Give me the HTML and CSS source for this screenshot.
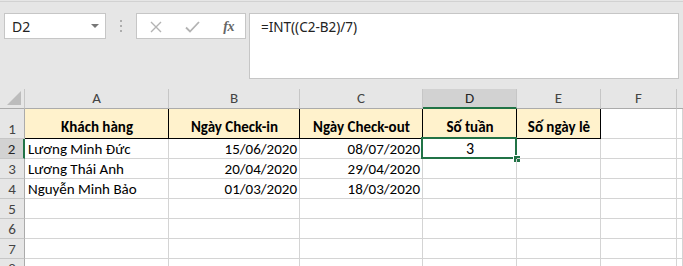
FILE: index.html
```html
<!DOCTYPE html>
<html lang="vi">
<head>
  <meta charset="UTF-8" />
  <title>Số tuần</title>
  <link rel="stylesheet" href="styles.css">
</head>
<body>
  <div class="toolbar">
    <div class="name-box">
      <span>D2</span>
      <span class="caret"></span>
    </div>
    <div class="grip"><i></i><i></i><i></i></div>
    <div class="fx-box">
      <svg width="12" height="12" viewBox="0 0 12 12"><path d="M1 1L11 11M11 1L1 11" stroke="#b3b3b3" stroke-width="1.4" fill="none"/></svg>
      <svg width="15" height="12" viewBox="0 0 15 12"><path d="M1 6.5L5 10.5L14 1" stroke="#b3b3b3" stroke-width="1.8" fill="none"/></svg>
      <span class="fx">fx</span>
    </div>
    <div class="formula">=INT((C2-B2)/7)</div>
  </div>

  <div class="sheet">
    <div class="corner"><span class="tri"></span></div>
    <div class="col-head">A</div>
    <div class="col-head">B</div>
    <div class="col-head">C</div>
    <div class="col-head sel">D</div>
    <div class="col-head">E</div>
    <div class="col-head">F</div>
    <div class="col-head last"></div>

    <div class="row-head">1</div>
    <div class="cell title">Khách hàng</div>
    <div class="cell title">Ngày Check-in</div>
    <div class="cell title">Ngày Check-out</div>
    <div class="cell title">Số tuần</div>
    <div class="cell title">Số ngày lẻ</div>
    <div class="cell"></div>
    <div class="cell"></div>

    <div class="row-head sel">2</div>
    <div class="cell">Lương Minh Đức</div>
    <div class="cell num">15/06/2020</div>
    <div class="cell num">08/07/2020</div>
    <div class="cell center active">3<span class="frame"><span class="handle"></span></span></div>
    <div class="cell"></div>
    <div class="cell"></div>
    <div class="cell"></div>

    <div class="row-head">3</div>
    <div class="cell">Lương Thái Anh</div>
    <div class="cell num">20/04/2020</div>
    <div class="cell num">29/04/2020</div>
    <div class="cell"></div>
    <div class="cell"></div>
    <div class="cell"></div>
    <div class="cell"></div>

    <div class="row-head">4</div>
    <div class="cell">Nguyễn Minh Bảo</div>
    <div class="cell num">01/03/2020</div>
    <div class="cell num">18/03/2020</div>
    <div class="cell"></div>
    <div class="cell"></div>
    <div class="cell"></div>
    <div class="cell"></div>

    <div class="row-head">5</div>
    <div class="cell"></div><div class="cell"></div><div class="cell"></div><div class="cell"></div><div class="cell"></div><div class="cell"></div><div class="cell"></div>

    <div class="row-head">6</div>
    <div class="cell"></div><div class="cell"></div><div class="cell"></div><div class="cell"></div><div class="cell"></div><div class="cell"></div><div class="cell"></div>

    <div class="row-head">7</div>
    <div class="cell"></div><div class="cell"></div><div class="cell"></div><div class="cell"></div><div class="cell"></div><div class="cell"></div><div class="cell"></div>

    <div class="row-head">8</div>
    <div class="cell"></div><div class="cell"></div><div class="cell"></div><div class="cell"></div><div class="cell"></div><div class="cell"></div><div class="cell"></div>
  </div>
</body>
</html>
```

FILE: styles.css
```css
* {
  box-sizing: border-box;
}
body {
  margin: 0;
  background: #e6e6e6;
  overflow: hidden;
  font-family: "Noto Sans", "Open Sans", sans-serif;
}

/* formula bar */
.toolbar {
  height: 88px;
  display: flex;
  align-items: flex-start;
  padding: 11px 4px 0 4px;
  border-top: 1px solid #d2d2d2;
  margin-top: 1px;
}
.name-box {
  width: 102px;
  height: 26px;
  background: white;
  border: 1px solid #c6c6c6;
  display: flex;
  align-items: center;
  justify-content: space-between;
  padding: 0 6px 0 7px;
  font-size: 14px;
  color: #222;
}
.caret {
  width: 0;
  height: 0;
  border-left: 4px solid transparent;
  border-right: 4px solid transparent;
  border-top: 4px solid #777;
}
.grip {
  width: 30px;
  height: 26px;
  display: flex;
  flex-direction: column;
  align-items: center;
  justify-content: center;
  gap: 3px;
}
.grip i {
  width: 2px;
  height: 2px;
  background: #adadad;
}
.fx-box {
  width: 110px;
  height: 26px;
  background: white;
  border: 1px solid #c6c6c6;
  display: flex;
  align-items: center;
  padding: 1px 11px 0 13px;
  justify-content: space-between;
}
.fx {
  font-family: "Liberation Serif", serif;
  font-style: italic;
  font-weight: bold;
  font-size: 14px;
  color: #666;
  letter-spacing: -0.5px;
}
.formula {
  margin-left: 3px;
  width: 430px;
  height: 66px;
  background: white;
  border: 1px solid #c6c6c6;
  padding: 4px 11px;
  font-size: 13.5px;
  color: #222;
}

/* grid */
.sheet {
  display: grid;
  grid-template-columns: 25px 144px 131px 123px 94px 84px 76px 1fr;
  grid-template-rows: 20px 30px repeat(7, 20px);
  background: white;
  font-family: Calibri, Lato, sans-serif;
  font-size: 15px;
}
.corner {
  background: #e6e6e6;
  border-right: 1px solid #c6c6c6;
  border-bottom: 1px solid #ababab;
  position: relative;
}
.tri {
  position: absolute;
  right: 3px;
  bottom: 3px;
  width: 0;
  height: 0;
  border-left: 14px solid transparent;
  border-bottom: 14px solid #bcbcbc;
}
.col-head {
  background: #e6e6e6;
  border-right: 1px solid #c6c6c6;
  border-bottom: 1px solid #ababab;
  text-align: center;
  line-height: 19px;
  color: #444;
}
.col-head.sel {
  background: #d2d2d2;
  border-bottom: 2px solid #217346;
  line-height: 18px;
  color: #262626;
}
.col-head.last {
  border-right: none;
}
.row-head {
  background: #e6e6e6;
  border-right: 1px solid #ababab;
  border-bottom: 1px solid #c6c6c6;
  display: flex;
  align-items: flex-end;
  justify-content: center;
  padding-bottom: 0;
  color: #444;
}
.row-head.sel {
  background: #d2d2d2;
  border-right: 2px solid #217346;
  color: #262626;
}
.cell {
  border-right: 1px solid #d4d4d4;
  border-bottom: 1px solid #d4d4d4;
  display: flex;
  align-items: flex-end;
  padding: 0 2px 0 3px;
  white-space: nowrap;
  color: #000;
  position: relative;
}
.cell.title {
  background: #fff2cc;
  border-right-color: #000;
  border-bottom-color: #000;
  justify-content: center;
  font-weight: bold;
  padding-bottom: 2px;
}
.cell.num {
  justify-content: flex-end;
}
.cell.center {
  justify-content: center;
  font-size: 16px;
}
.frame {
  position: absolute;
  left: -2px;
  top: -2px;
  right: -1px;
  bottom: -1px;
  border: 2px solid #217346;
}
.handle {
  position: absolute;
  right: -5px;
  bottom: -5px;
  width: 7px;
  height: 7px;
  background: #217346;
  border-left: 1px solid white;
  border-top: 1px solid white;
}
```
